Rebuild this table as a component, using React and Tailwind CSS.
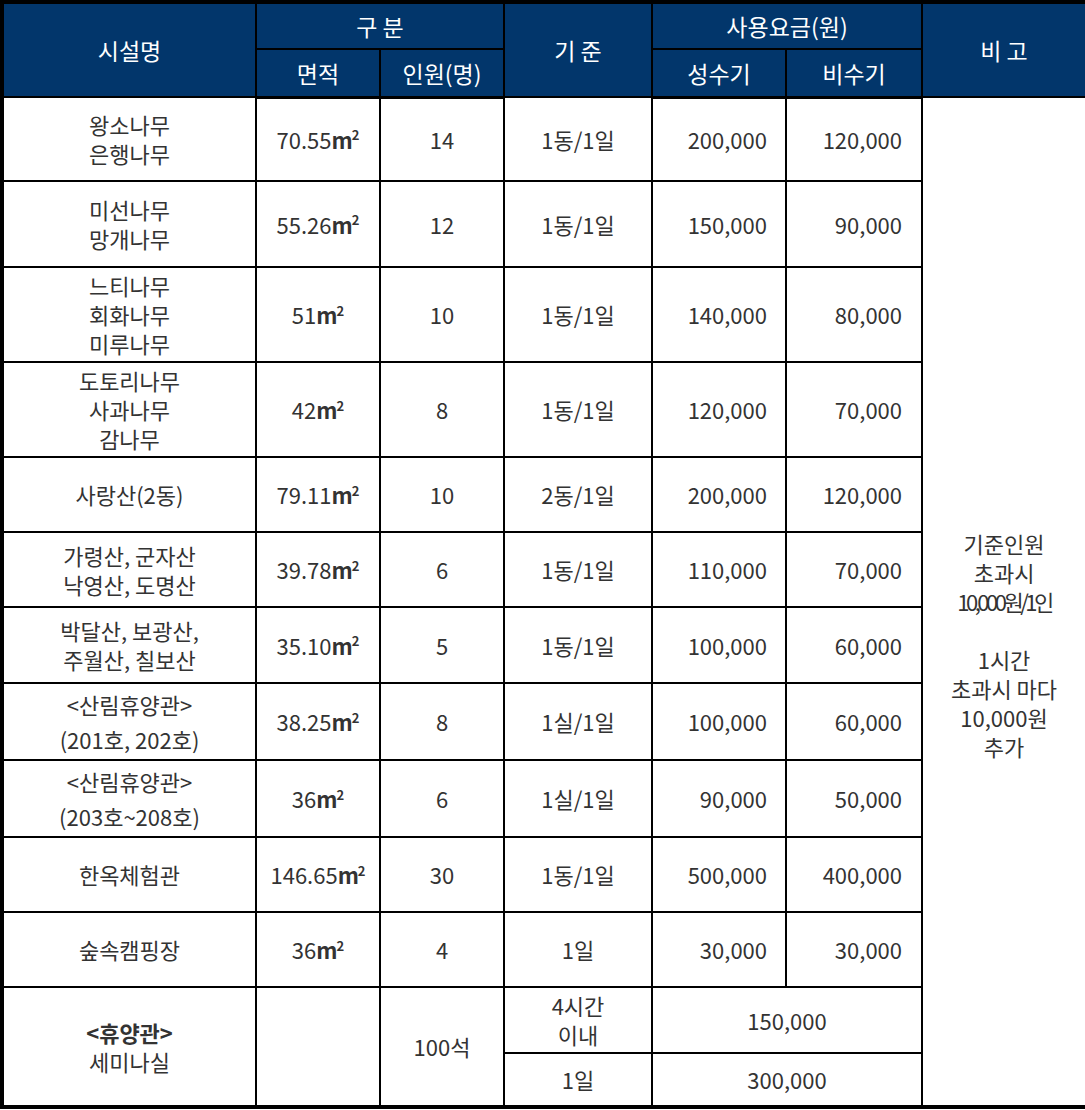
import React from "react";

const rows = [
  { name: ["왕소나무", "은행나무"], area: "70.55", ppl: "14", unit: "1동/1일", peak: "200,000", off: "120,000", h: "h-[84px]" },
  { name: ["미선나무", "망개나무"], area: "55.26", ppl: "12", unit: "1동/1일", peak: "150,000", off: "90,000", h: "h-[86px]" },
  { name: ["느티나무", "회화나무", "미루나무"], area: "51", ppl: "10", unit: "1동/1일", peak: "140,000", off: "80,000", h: "h-[95px]" },
  { name: ["도토리나무", "사과나무", "감나무"], area: "42", ppl: "8", unit: "1동/1일", peak: "120,000", off: "70,000", h: "h-[95px]" },
  { name: ["사랑산(2동)"], area: "79.11", ppl: "10", unit: "2동/1일", peak: "200,000", off: "120,000", h: "h-[75px]" },
  { name: ["가령산, 군자산", "낙영산, 도명산"], area: "39.78", ppl: "6", unit: "1동/1일", peak: "110,000", off: "70,000", h: "h-[75px]" },
  { name: ["박달산, 보광산,", "주월산, 칠보산"], area: "35.10", ppl: "5", unit: "1동/1일", peak: "100,000", off: "60,000", h: "h-[76px]" },
  { name: ["<산림휴양관>", "(201호, 202호)"], area: "38.25", ppl: "8", unit: "1실/1일", peak: "100,000", off: "60,000", h: "h-[77px]", wide: true },
  { name: ["<산림휴양관>", "(203호~208호)"], area: "36", ppl: "6", unit: "1실/1일", peak: "90,000", off: "50,000", h: "h-[77px]", wide: true },
  { name: ["한옥체험관"], area: "146.65", ppl: "30", unit: "1동/1일", peak: "500,000", off: "400,000", h: "h-[75px]" },
  { name: ["숲속캠핑장"], area: "36", ppl: "4", unit: "1일", peak: "30,000", off: "30,000", h: "h-[75px]" },
];

const th = "border-2 border-black bg-[#02366b] text-white font-normal text-[23px] leading-[28px] text-center align-middle";
const td = "border-2 border-black text-center align-middle";

// 면적 + ㎡ (bold m, small raised 2)
function Area({ v }) {
  return (
    <span>
      {v}
      <b className="font-bold">m</b>
      <b className="font-bold text-[13px] leading-none align-[0.65em] ml-[-1px]">2</b>
    </span>
  );
}

export default function App() {
  return (
    <div className="w-[1085px] h-[1110px] bg-white">
      <table
        className="w-[1085px] table-fixed border-collapse border-[4px] border-black text-[22px] leading-[29px] text-[#333]"
        style={{ fontFamily: '"Noto Sans CJK KR", "Noto Sans", sans-serif' }}
      >
        <colgroup>
          <col className="w-[254px]" />
          <col className="w-[124px]" />
          <col className="w-[124px]" />
          <col className="w-[148px]" />
          <col className="w-[134px]" />
          <col className="w-[136px]" />
          <col className="w-[165px]" />
        </colgroup>
        <thead>
          <tr className="h-[47px]">
            <th rowSpan={2} className={th}>시설명</th>
            <th colSpan={2} className={th}>구 분</th>
            <th rowSpan={2} className={th}>기 준</th>
            <th colSpan={2} className={th}>사용요금(원)</th>
            <th rowSpan={2} className={th}>비 고</th>
          </tr>
          <tr className="h-[48px]">
            <th className={th + " border-b-[3px]"}>면적</th>
            <th className={th + " border-b-[3px]"}>인원(명)</th>
            <th className={th + " border-b-[3px]"}>성수기</th>
            <th className={th + " border-b-[3px]"}>비수기</th>
          </tr>
        </thead>
        <tbody>
          {rows.map((r, i) => (
            <tr key={i} className={r.h}>
              <td className={td + (r.wide ? " leading-[35px]" : "")}>
                {r.name.map((n, j) => (
                  <div key={j}>{n}</div>
                ))}
              </td>
              <td className={td}>
                <Area v={r.area} />
              </td>
              <td className={td}>{r.ppl}</td>
              <td className={td}>{r.unit}</td>
              <td className={td + " text-right pr-[18px]"}>{r.peak}</td>
              <td className={td + " text-right pr-[19px]"}>{r.off}</td>
              {i === 0 && (
                <td rowSpan={13} className={td + " pt-[86px]"}>
                  <div>기준인원</div>
                  <div>초과시</div>
                  <div className="tracking-[-3.5px]">10,000원/1인</div>
                  <div>&nbsp;</div>
                  <div>1시간</div>
                  <div>초과시 마다</div>
                  <div>10,000원</div>
                  <div>추가</div>
                </td>
              )}
            </tr>
          ))}
          <tr className="h-[66px]">
            <td rowSpan={2} className={td}>
              <div className="font-bold">&lt;휴양관&gt;</div>
              <div>세미나실</div>
            </td>
            <td rowSpan={2} className={td}></td>
            <td rowSpan={2} className={td}>100석</td>
            <td className={td}>
              <div>4시간</div>
              <div>이내</div>
            </td>
            <td colSpan={2} className={td}>150,000</td>
          </tr>
          <tr className="h-[54px]">
            <td className={td}>1일</td>
            <td colSpan={2} className={td}>300,000</td>
          </tr>
        </tbody>
      </table>
    </div>
  );
}
